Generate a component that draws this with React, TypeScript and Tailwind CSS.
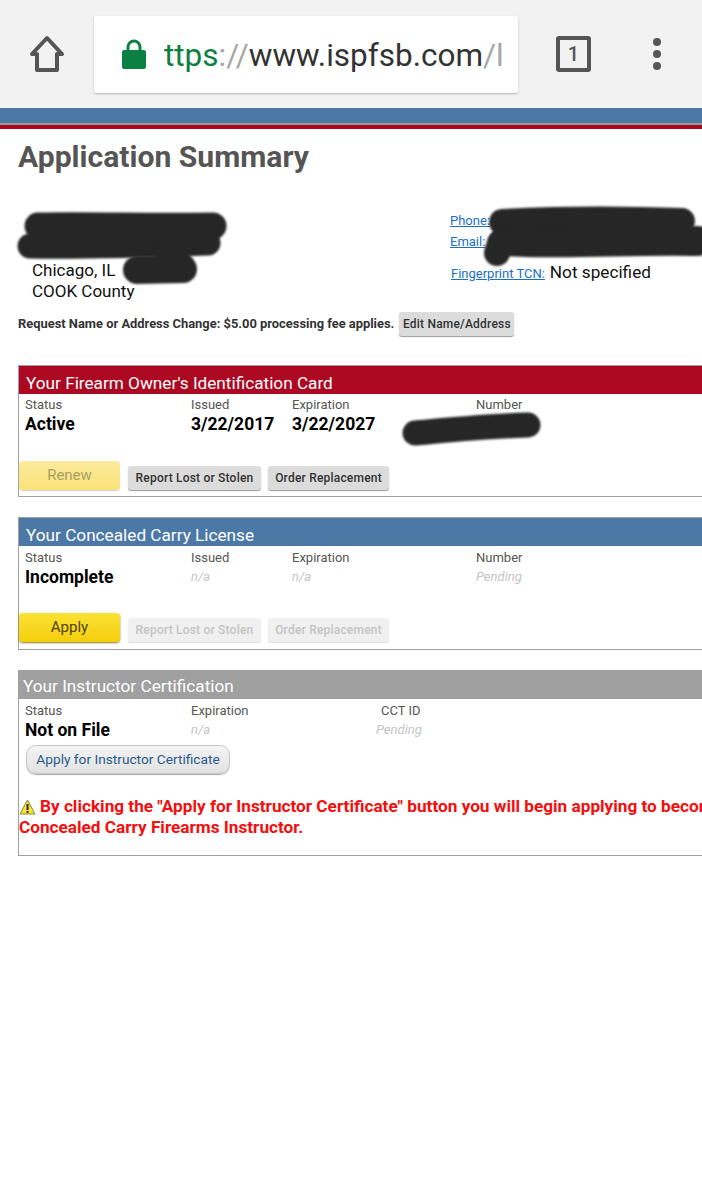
const font = "font-['Roboto',sans-serif]";

function Blob({ d, w, className = "" }: { d: string; w: number; className?: string }) {
  // marker scribbles over the private details
  return (
    <svg className={`absolute left-0 top-0 overflow-visible blur-[1px] ${className}`} width="10" height="10" viewBox="0 0 10 10">
      <path d={d} fill="none" stroke="#262626" strokeWidth={w} strokeLinecap="round" strokeLinejoin="round" />
    </svg>
  );
}

function GrayButton({ label, faded, wide }: { label: string; faded?: boolean; wide?: string }) {
  return (
    <div
      className={`flex h-[24px] items-center justify-center rounded-[3px] text-[12px] font-medium tracking-[0.2px] ${wide} ${
        faded
          ? "bg-[#f0f0f0] text-[#c4c4c4] shadow-[0_1px_1px_#dddddd]"
          : "bg-[#dcdcdc] text-[#333333] shadow-[0_1px_1px_#999999]"
      }`}
    >
      {label}
    </div>
  );
}

function Label({ children, className = "" }: { children: string; className?: string }) {
  return <div className={`text-[13px] leading-[15px] text-[#555555] ${className}`}>{children}</div>;
}

function Value({ children }: { children: string }) {
  return <div className="mt-[2px] text-[17.5px] font-bold leading-[20px] text-black">{children}</div>;
}

function Muted({ children }: { children: string }) {
  return <div className="mt-[2px] text-[13px] italic leading-[20px] text-[#c4c4c4]">{children}</div>;
}

function CardHead({ title, color, pad }: { title: string; color: string; pad: string }) {
  return (
    <div className={`flex h-[28px] items-end text-[17.2px] leading-[21px] text-white ${color} ${pad}`}>{title}</div>
  );
}

export default function App() {
  return (
    <div className={`relative h-[1200px] w-[702px] overflow-hidden bg-white ${font}`}>
      {/* Browser bar */}
      <div className="flex h-[108px] items-center bg-[#f2f2f2]">
        <div className="flex w-[94px] justify-center">
          <svg width="36" height="38" viewBox="0 0 36 38" fill="none" stroke="#555555" strokeWidth="4" strokeLinejoin="round">
            <path d="M18 3 L33 19 H28 V35 H8 V19 H3 Z" />
          </svg>
        </div>
        <div className="flex h-[77px] w-[424px] items-center overflow-hidden rounded-[2px] bg-white pl-[28px] shadow-[0_1px_2px_#b5b5b5]">
          <svg width="24" height="32" viewBox="0 0 24 32" className="shrink-0">
            <path d="M6 14 V9 a6 6 0 0 1 12 0 V14" fill="none" stroke="#0b8043" strokeWidth="3" />
            <rect x="0" y="12" width="24" height="19" rx="2" fill="#0b8043" />
          </svg>
          <div className="ml-[18px] mt-[3px] w-[338px] overflow-hidden whitespace-nowrap text-[31.5px] leading-[40px] text-[#333333]">
            <span className="text-[#0b8043]">ttps</span>
            <span className="text-[#a6a6a6]">://</span>www.ispfsb.com<span className="text-[#a6a6a6]">/l</span>
          </div>
        </div>
        <div className="ml-[38px] flex h-[36px] w-[35px] items-center justify-center rounded-[3px] border-[4px] border-[#555555] text-[20px] font-medium text-[#555555]">
          1
        </div>
        <div className="ml-[62px] flex flex-col gap-[4px]">
          <div className="size-[8px] rounded-full bg-[#555555]" />
          <div className="size-[8px] rounded-full bg-[#555555]" />
          <div className="size-[8px] rounded-full bg-[#555555]" />
        </div>
      </div>

      {/* Site header */}
      <div className="h-[15px] bg-[#4c78a5]" />
      <div className="h-[2px] bg-[#9a9aa0]" />
      <div className="h-[4px] bg-[#ad0822]" />

      <div className="pl-[18px]">
        <h1 className="mt-[10px] text-[30.1px] font-bold leading-[36px] text-[#555555]">Application Summary</h1>

        {/* Contact block */}
        <div className="relative h-[137px] text-[#111111]">
          <div className="pl-[14px] pt-[85px] text-[17px] leading-[20.5px]">
            <div>Chicago, IL</div>
            <div>COOK County</div>
          </div>
          <div className="absolute left-[432px] top-[35px] text-[13px]">
            <div className="leading-[21px] text-[#1a6fc9] underline">Phone:</div>
            <div className="leading-[21px] text-[#1a6fc9] underline">Email:</div>
            <div className="ml-[1px] mt-[8px] flex items-baseline gap-[5px] whitespace-nowrap">
              <span className="text-[#1a6fc9] underline">Fingerprint TCN:</span>
              <span className="text-[17.2px] text-[#111111]">Not specified</span>
            </div>
          </div>
          <Blob w={27} d="M20 51 C70 50 130 52 195 51" />
          <Blob w={25} d="M12 71 C70 72 130 70 190 68" />
          <Blob w={28} d="M119 95 L165 94 M150 75 L165 94" />
          <Blob w={26} d="M484 47 C540 44 610 44 664 46" />
          <Blob w={30} d="M487 66 C540 70 620 64 680 66" />
          <Blob w={26} d="M479 78 L482 68" />
        </div>

        <div className="flex items-center">
          <span className="text-[12.9px] font-bold leading-[24px] text-[#333333]">
            Request Name or Address Change: $5.00 processing fee applies.
          </span>
          <GrayButton label="Edit Name/Address" wide="ml-[5px] w-[115px]" />
        </div>

        {/* FOID card */}
        <section className="mt-[29px] h-[132px] w-[720px] border border-[#a0a0a0]">
          <CardHead title="Your Firearm Owner's Identification Card" color="bg-[#ad0822]" pad="pl-[7px]" />
          <div className="relative grid h-[66px] grid-cols-[166px_101px_184px_1fr] pl-[6px] pt-[3px]">
            <div>
              <Label>Status</Label>
              <Value>Active</Value>
            </div>
            <div>
              <Label>Issued</Label>
              <Value>3/22/2017</Value>
            </div>
            <div>
              <Label>Expiration</Label>
              <Value>3/22/2027</Value>
            </div>
            <div>
              <Label>Number</Label>
            </div>
            <Blob w={25} d="M396 39 C430 36 470 32 509 31" />
          </div>
          <div className="flex items-center">
            <div className="flex h-[29px] w-[101px] items-center justify-center rounded-[4px] bg-gradient-to-b from-[#fdeb9c] to-[#fbe278] text-[15px] text-[#a89f64] shadow-[0_1px_1px_#ccc]">
              Renew
            </div>
            <div className="mt-[6px] flex gap-[7px] pl-[8px]">
              <GrayButton label="Report Lost or Stolen" wide="w-[133px]" />
              <GrayButton label="Order Replacement" wide="w-[121px]" />
            </div>
          </div>
        </section>

        {/* CCL card */}
        <section className="mt-[20px] h-[133px] w-[720px] border border-[#a0a0a0]">
          <CardHead title="Your Concealed Carry License" color="bg-[#4c78a5]" pad="pl-[7px]" />
          <div className="grid h-[66px] grid-cols-[166px_101px_184px_1fr] pl-[6px] pt-[4px]">
            <div>
              <Label>Status</Label>
              <Value>Incomplete</Value>
            </div>
            <div>
              <Label>Issued</Label>
              <Muted>n/a</Muted>
            </div>
            <div>
              <Label>Expiration</Label>
              <Muted>n/a</Muted>
            </div>
            <div>
              <Label>Number</Label>
              <Muted>Pending</Muted>
            </div>
          </div>
          <div className="flex items-center">
            <div className="flex h-[29px] w-[101px] items-center justify-center rounded-[4px] bg-gradient-to-b from-[#fbe233] to-[#f5cd05] text-[15px] text-[#4a4300] shadow-[0_1px_2px_#8a7a20]">
              Apply
            </div>
            <div className="mt-[6px] flex gap-[7px] pl-[8px]">
              <GrayButton faded label="Report Lost or Stolen" wide="w-[133px]" />
              <GrayButton faded label="Order Replacement" wide="w-[121px]" />
            </div>
          </div>
        </section>

        {/* Instructor card */}
        <section className="mt-[20px] h-[186px] w-[720px] border border-[#a0a0a0]">
          <CardHead title="Your Instructor Certification" color="bg-[#a0a0a0]" pad="pl-[4px] pb-[2px]" />
          <div className="grid grid-cols-[166px_185px_1fr] pl-[6px] pt-[4px]">
            <div>
              <Label>Status</Label>
              <Value>Not on File</Value>
            </div>
            <div>
              <Label>Expiration</Label>
              <Muted>n/a</Muted>
            </div>
            <div>
              <Label className="pl-[5px]">CCT ID</Label>
              <Muted>Pending</Muted>
            </div>
          </div>
          <div className="ml-[7px] mt-[5px] flex h-[29px] w-[204px] items-center justify-center rounded-[10px] border border-[#c8c8c8] bg-gradient-to-b from-[#f4f4f4] to-[#e2e2e2] text-[13.7px] text-[#2a5a8c] shadow-[0_1px_1px_#aaaaaa]">
            Apply for Instructor Certificate
          </div>
          <div className="mt-[22px] whitespace-nowrap text-[17.2px] font-bold leading-[21px] text-[#f60d0d]">
            <div className="flex items-center">
              <svg width="17" height="16" viewBox="0 0 17 16" className="mr-[4px] shrink-0">
                <path d="M8.5 1 L16 15 H1 Z" fill="#f3e23a" stroke="#8a8a30" strokeWidth="1" strokeLinejoin="round" />
                <rect x="7.6" y="5" width="1.9" height="6" fill="#222222" />
                <rect x="7.6" y="12" width="1.9" height="1.9" fill="#222222" />
              </svg>
              By clicking the "Apply for Instructor Certificate" button you will begin applying to become a
            </div>
            <div>Concealed Carry Firearms Instructor.</div>
          </div>
        </section>
      </div>
    </div>
  );
}
